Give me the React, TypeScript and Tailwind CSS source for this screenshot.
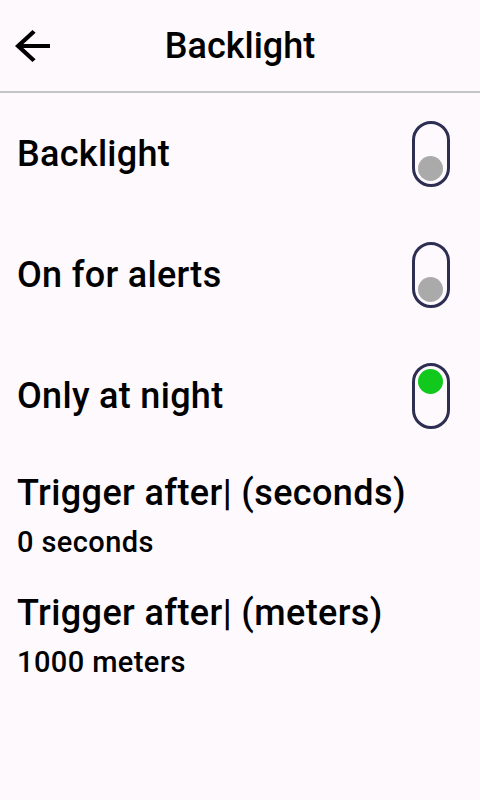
import { useState } from "react";

const Toggle = ({ on }: { on: boolean }) => (
  <div
    className={`flex h-[66px] w-[38px] shrink-0 flex-col rounded-full border-[3px] border-[#2e2d52] p-[3px] ${
      on ? "justify-start" : "justify-end"
    }`}
  >
    <div className={`h-[25px] w-[25px] rounded-full ${on ? "bg-[#11c81d]" : "bg-[#aaaaaa]"}`} />
  </div>
);

export default function App() {
  const [toggles] = useState([
    { label: "Backlight", on: false },
    { label: "On for alerts", on: false },
    { label: "Only at night", on: true },
  ]);

  const fields = [
    { label: "Trigger after| (seconds)", value: "0 seconds" },
    { label: "Trigger after| (meters)", value: "1000 meters" },
  ];

  return (
    <div className="h-[800px] w-[480px] bg-[#fdf9fd] font-['Roboto',sans-serif] text-black">
      {/* Header */}
      <div className="relative flex h-[93px] items-center justify-center border-b-2 border-[#c6c6c6]">
        <svg
          className="absolute left-[15px] top-[30px]"
          width="35"
          height="32"
          viewBox="4 4 16 16"
          preserveAspectRatio="none"
          fill="currentColor"
        >
          <path d="M20 11H7.83l5.59-5.59L12 4l-8 8 8 8 1.41-1.41L7.83 13H20v-2z" />
        </svg>
        <h1 className="text-[36px] font-medium leading-none">Backlight</h1>
      </div>

      {/* Switch rows */}
      <div className="flex flex-col gap-[55px] px-[17px] pt-[28px] pr-[30px]">
        {toggles.map((t) => (
          <div key={t.label} className="flex items-center justify-between">
            <span className="text-[36px] font-medium leading-none tracking-[0.3px]">{t.label}</span>
            <Toggle on={t.on} />
          </div>
        ))}
      </div>

      {/* Value rows */}
      <div className="mt-[42px] flex flex-col gap-[29px] px-[17px]">
        {fields.map((f) => (
          <div key={f.label} className="flex flex-col">
            <span className="text-[36px] font-medium leading-[44px] tracking-[0.4px]">{f.label}</span>
            <span className="mt-[7px] text-[29px] font-medium leading-[40px] tracking-[0.4px]">{f.value}</span>
          </div>
        ))}
      </div>
    </div>
  );
}
